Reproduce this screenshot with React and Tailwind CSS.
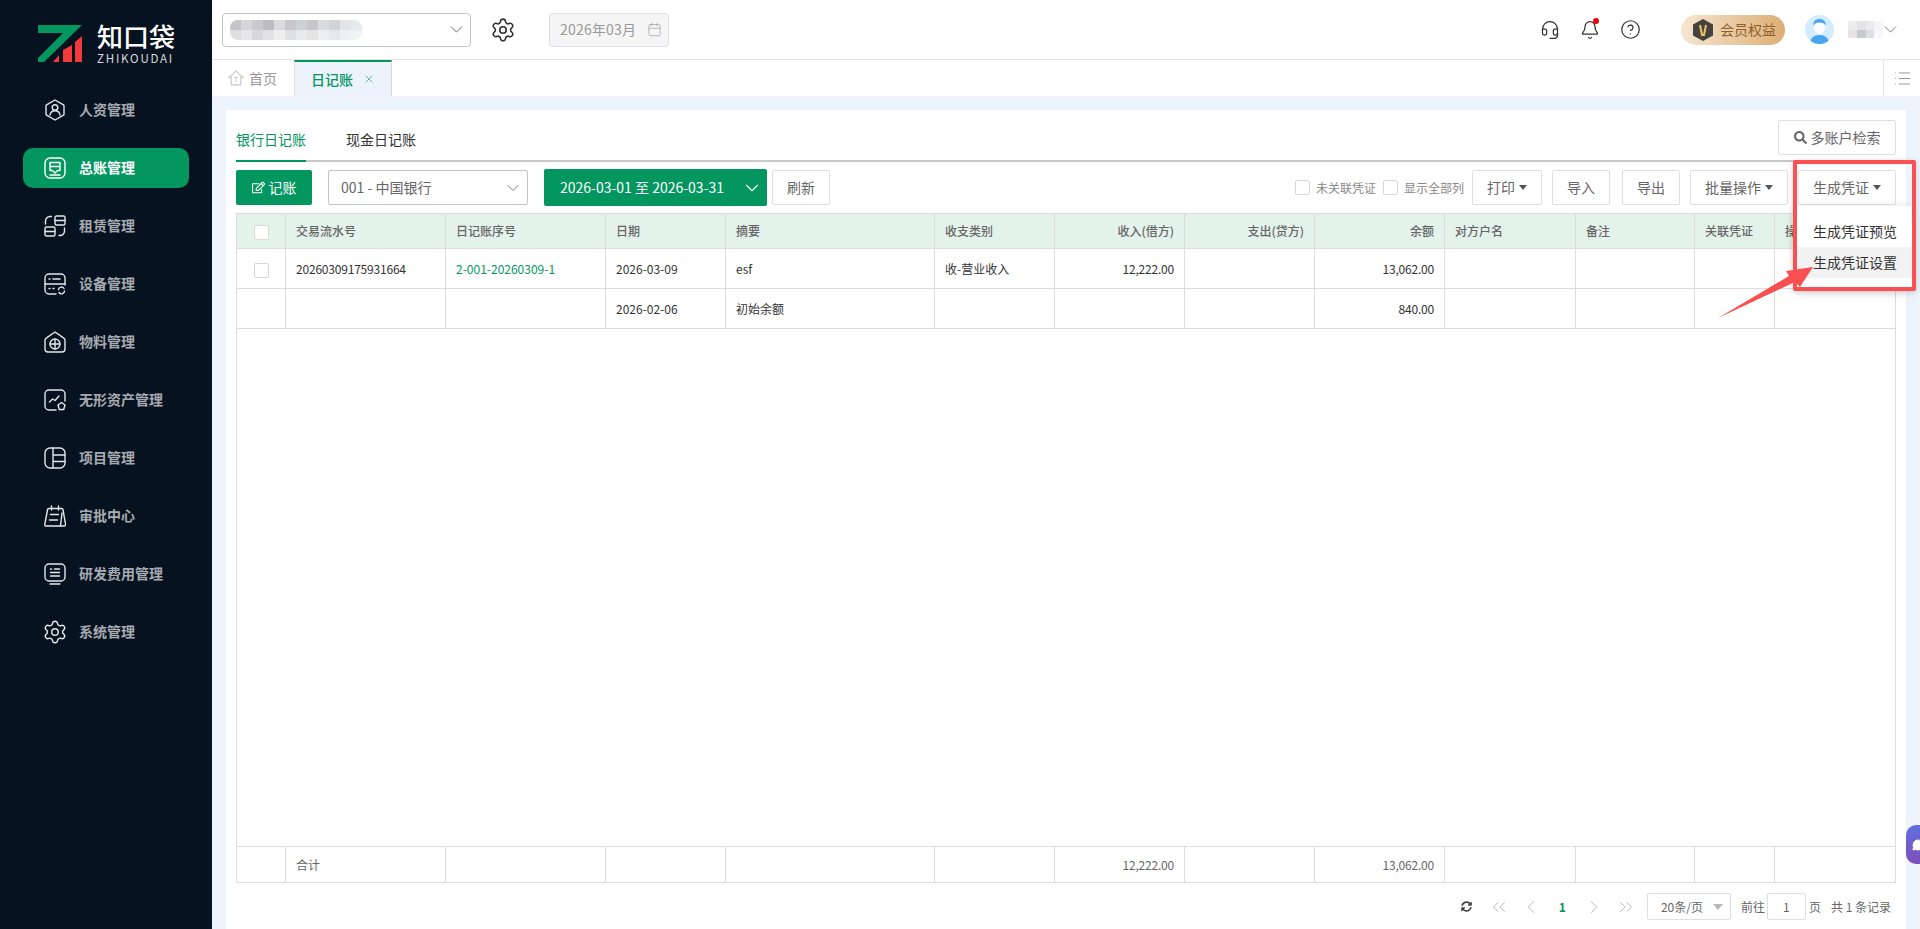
import {
  Bell,
  Calendar,
  ChevronDown,
  ChevronLeft,
  ChevronRight,
  ChevronsLeft,
  ChevronsRight,
  CircleHelp,
  Headset,
  List,
  MessageCircle,
  Settings,
  X,
} from "lucide-react";
import { FaRegEdit, FaSearch, FaSyncAlt } from "react-icons/fa";

const GRID =
  "grid grid-cols-[49px_160px_160px_120px_209px_120px_130px_130px_130px_131px_119px_80px_120px]";

const iconProps = {
  width: 22,
  height: 22,
  viewBox: "0 0 22 22",
  fill: "none",
  stroke: "currentColor",
  strokeWidth: 1.4,
  strokeLinecap: "round",
  strokeLinejoin: "round",
};

const navItems = [
  {
    label: "人资管理",
    icon: (
      <svg {...iconProps}>
        <path d="M11 1l8.500 4.800a1 1 0 0 1 .5.9v8.600a1 1 0 0 1-.5.9L11 21l-8.500-4.800a1 1 0 0 1-.5-.9V6.700a1 1 0 0 1 .5-.9z" />
        <circle cx="11" cy="8.500" r="2.800" />
        <path d="M6 16c.5-3 2.500-4.200 5-4.200s4.500 1.200 5 4.200" />
      </svg>
    ),
  },
  {
    label: "总账管理",
    active: true,
    icon: (
      <svg {...iconProps}>
        <rect x="1" y="1" width="20" height="20" rx="5" />
        <path d="M6 5.500h10v8h-2.500L11 16l-2.500-2.500H6zM6 9.500h10" />
        <path d="M6 18h10" />
      </svg>
    ),
  },
  {
    label: "租赁管理",
    icon: (
      <svg {...iconProps}>
        <path d="M1.500 9V6a4.500 4.500 0 0 1 4.500-4.500h1.500" />
        <rect x="11" y="1" width="10" height="9" rx="1.500" />
        <path d="M11 5.500h10" />
        <rect x="1" y="12" width="10" height="9" rx="1.500" />
        <path d="M1 16.500h10M20.500 13v3a4.500 4.500 0 0 1-4.500 4.500h-1" />
      </svg>
    ),
  },
  {
    label: "设备管理",
    icon: (
      <svg {...iconProps}>
        <path d="M12 21H5a4 4 0 0 1-4-4V5a4 4 0 0 1 4-4h12a4 4 0 0 1 4 4v7" />
        <path d="M1 11h20M5 6h1M9 6h7M5 15.500h1M9 15.500h1" />
        <path d="M14.500 16.500a3 3 0 0 1 5.500-1M20.500 18a3 3 0 0 1-5.500 1.500" />
      </svg>
    ),
  },
  {
    label: "物料管理",
    icon: (
      <svg {...iconProps}>
        <path d="M11 1l8.500 5.800a3 3 0 0 1 1.500 2.500V18a3 3 0 0 1-3 3H4a3 3 0 0 1-3-3V9.300a3 3 0 0 1 1.500-2.500z" />
        <circle cx="11" cy="13" r="5" />
        <path d="M6 13h10M11 8v10" />
      </svg>
    ),
  },
  {
    label: "无形资产管理",
    icon: (
      <svg {...iconProps}>
        <path d="M12 21H5a4 4 0 0 1-4-4V5a4 4 0 0 1 4-4h12a4 4 0 0 1 4 4v7" />
        <path d="M5.500 13l3-3 2.500 1.500L15 7" />
        <path d="M17.500 13.500l3.500 2.500-1.300 4.500h-4.400L14 16z" />
      </svg>
    ),
  },
  {
    label: "项目管理",
    icon: (
      <svg {...iconProps}>
        <rect x="1" y="1" width="20" height="20" rx="5" />
        <path d="M9 1v20M9 8h12M9 14.500h12" />
      </svg>
    ),
  },
  {
    label: "审批中心",
    icon: (
      <svg {...iconProps}>
        <path d="M5 3.500h12.500a1.500 1.500 0 0 1 1.500 1.300L21.500 19a1.500 1.500 0 0 1-1.500 2H2a1.300 1.300 0 0 1-1.200-1.800L3.500 5A1.500 1.500 0 0 1 5 3.500z" />
        <path d="M7.500 1v4M14.500 1v4M6.500 9.500h8M5.500 15h8M16.500 21l1.500-13" />
      </svg>
    ),
  },
  {
    label: "研发费用管理",
    icon: (
      <svg {...iconProps}>
        <rect x="1" y="1" width="20" height="17" rx="4" />
        <path d="M6.500 6h1M10.500 6h5M6.500 9.500h9M6.500 13h9M6 21h10" />
      </svg>
    ),
  },
  {
    label: "系统管理",
    icon: <Settings size={26} strokeWidth={1.3} className="shrink-0" />,
  },
];

const columns = [
  { label: "" },
  { label: "交易流水号" },
  { label: "日记账序号" },
  { label: "日期" },
  { label: "摘要" },
  { label: "收支类别" },
  { label: "收入(借方)", right: true },
  { label: "支出(贷方)", right: true },
  { label: "余额", right: true },
  { label: "对方户名" },
  { label: "备注" },
  { label: "关联凭证" },
  { label: "操作" },
];

const rows = [
  ["check", "20260309175931664", "2-001-20260309-1", "2026-03-09", "esf", "收-营业收入", "12,222.00", "", "13,062.00", "", "", "", ""],
  ["", "", "", "2026-02-06", "初始余额", "", "", "", "840.00", "", "", "", ""],
];

const totals = ["", "合计", "", "", "", "", "12,222.00", "", "13,062.00", "", "", "", ""];

const companyMosaic = [
  "bg-[#c4c4c9]", "bg-[#d6d6da]", "bg-[#c9c9ce]", "bg-[#bcbcc2]", "bg-[#dcdce0]", "bg-[#c6c6cc]", "bg-[#ced0d4]", "bg-[#c8c6ca]", "bg-[#dadcdf]", "bg-[#d2d4d9]", "bg-[#e2e4e7]", "bg-[#e8e9ec]",
  "bg-[#dededf]", "bg-[#e6e6e8]", "bg-[#d8d8da]", "bg-[#e2e2e4]", "bg-[#eeeeef]", "bg-[#e0e0e2]", "bg-[#e8e9ea]", "bg-[#e4e4e4]", "bg-[#eeeeee]", "bg-[#e6e8ea]", "bg-[#eff0f1]", "bg-[#f1f2f3]",
];

const nameMosaic = [
  "bg-[#ececec]", "bg-[#e4e4e6]", "bg-[#eaeaea]", "bg-[#f6f6f8]",
  "bg-[#e8e4e4]", "bg-[#c8cad2]", "bg-[#dedfe2]", "bg-[#f8f8fa]",
];

function Caret() {
  return (
    <span className="ml-1 inline-block border-x-[4px] border-t-[5px] border-x-transparent border-t-[#555]" />
  );
}

function Button({ children, className = "" }) {
  return (
    <button
      className={`flex h-[35px] items-center justify-center rounded-[2px] border border-[#dcdfe6] bg-white text-[14px] text-[#666] ${className}`}
    >
      {children}
    </button>
  );
}

function Checkbox({ className = "" }) {
  return (
    <span
      className={`block size-[15px] rounded-[2px] border border-[#d4d6d9] bg-white ${className}`}
    />
  );
}

function LogoMark() {
  return (
    <svg width="44" height="37" viewBox="0 0 44 37" className="mt-[2px]">
      <polygon points="0,0 44,0 6,37 0,37 0,33 25,8 0,8" fill="#03965e" />
      <polygon points="15,37 21,30 21,37" fill="#f33a3a" />
      <polygon points="25,37 25,25 34,20 34,37" fill="#f33a3a" />
      <polygon points="37,37 37,17 44,11 44,37" fill="#f33a3a" />
    </svg>
  );
}

function Sidebar() {
  return (
    <aside className="flex w-[212px] shrink-0 flex-col bg-[#06121f]">
      <div className="flex h-[90px] items-start pt-[23px] pl-[38px]">
        <LogoMark />
        <div className="ml-[15px] flex flex-col text-white">
          <span className="h-[26px] text-[26px] leading-[26px] font-medium">知口袋</span>
          <span className="mt-[4px] text-[11.500px] leading-[10px] tracking-[1.8px] text-[#d8dadd]">ZHIKOUDAI</span>
        </div>
      </div>
      <nav className="flex flex-col gap-[18px] px-[23px]">
        {navItems.map((item) => (
          <a
            key={item.label}
            className={`flex h-[40px] items-center gap-[13px] rounded-[10px] pl-[21px] text-[14px] font-bold ${
              item.active ? "bg-[#03965e] text-white" : "text-[#a6abb1]"
            }`}
          >
            <span className={`flex w-[22px] justify-center ${item.active ? "text-white" : "text-[#e4e6e8]"}`}>
              {item.icon}
            </span>
            <span className="pb-[2px]">{item.label}</span>
          </a>
        ))}
      </nav>
    </aside>
  );
}

function Header() {
  return (
    <header className="flex h-[60px] shrink-0 items-center border-b border-[#e6e6e6] bg-white pl-[10px]">
      <div className="flex h-[34px] w-[249px] items-center justify-between rounded-[4px] border border-[#c0c4cc] pr-[3px] pl-[7px]">
        <div className="grid w-[132px] grid-cols-12 overflow-hidden rounded-[8px]">
          {companyMosaic.map((c, i) => (
            <span key={i} className={`h-[10px] ${c}`} />
          ))}
        </div>
        <ChevronDown size={21} strokeWidth={1} className="text-[#555]" />
      </div>
      <Settings size={26} strokeWidth={1.5} className="ml-[19px] text-[#333]" />
      <div className="ml-[33px] flex h-[34px] w-[120px] items-center gap-[11px] rounded-[4px] border border-[#dcdfe6] bg-[#f5f5f5] pl-[10px] text-[14px] tracking-[0.2px] text-[#999]">
        2026年03月
        <Calendar size={15} strokeWidth={1.3} className="text-[#aaa]" />
      </div>
      <div className="ml-auto flex items-center">
        <Headset size={20} strokeWidth={1.5} className="text-[#333]" />
        <span className="relative ml-[20px]">
          <Bell size={20} strokeWidth={1.5} className="text-[#333]" />
          <span className="absolute -top-[2px] right-[1px] size-[6px] rounded-full bg-red-600" />
        </span>
        <CircleHelp size={21} strokeWidth={1.4} className="ml-[20px] text-[#333]" />
        <div className="ml-[40px] flex h-[30px] w-[104px] items-center rounded-full bg-linear-to-r from-[#f6e6d0] to-[#dcae74] pl-[12px]">
          <svg width="20" height="22" viewBox="0 0 20 22">
            <polygon points="10,0 20,5.500 20,16.500 10,22 0,16.500 0,5.500" fill="#45433f" />
            <path d="M7 6l2 10h2l2-10" fill="none" stroke="#eec15f" strokeWidth="2" />
          </svg>
          <span className="ml-[7px] text-[14px] text-[#8f5f30]">会员权益</span>
        </div>
        <div className="ml-[20px] size-[29px] overflow-hidden rounded-full bg-[#d3ecff]">
          <svg width="29" height="29" viewBox="0 0 29 29">
            <ellipse cx="14.500" cy="12" rx="6" ry="7" fill="#fbfdff" />
            <path d="M8.500 11c-.5-5 2-7 6-7s6.500 2 6 7c-1-3-3-3.500-6-3.500s-5 .5-6 3.500z" fill="#4ba4ee" />
            <path d="M5 29c0-6 4-9 9.500-9s9.500 3 9.500 9z" fill="#4ba4ee" />
          </svg>
        </div>
        <div className="ml-[14px] grid w-[35px] grid-cols-4">
          {nameMosaic.map((c, i) => (
            <span key={i} className={`h-[8.500px] ${c}`} />
          ))}
        </div>
        <ChevronDown size={21} strokeWidth={1} className="mr-[19px] -ml-[3px] text-[#667]" />
      </div>
    </header>
  );
}

function TabsBar() {
  return (
    <div className="flex h-[36px] shrink-0 items-stretch bg-white">
      <div className="flex w-[82px] items-center gap-[5px] pl-[16px] text-[14px] text-[#999]">
        <svg width="16" height="16" viewBox="0 0 15 15" fill="none" stroke="#c8c8c8" strokeWidth="1.100">
          <path d="M7.500 1L14 7h-2v7H3V7H1z" />
          <path d="M6 7h3M7.500 7v4" />
        </svg>
        首页
      </div>
      <div className="flex w-[98px] items-center gap-[10px] border-x border-t-2 border-x-[#d8dbe0] border-t-[#03965e] bg-[#edf3fd] pl-[16px] text-[14px] font-medium text-[#03965e]">
        日记账
        <X size={12} strokeWidth={1.2} />
      </div>
      <div className="ml-auto flex w-[37px] items-center justify-center border-l border-[#e6e6e6]">
        <List size={19} strokeWidth={1.1} className="text-[#888]" />
      </div>
    </div>
  );
}

function Toolbar() {
  return (
    <div className="mt-[8px] flex h-[35px] items-center">
      <button className="flex h-[35px] w-[76px] items-center justify-center gap-[4px] rounded-[2px] bg-[#03965e] text-[14px] text-white">
        <FaRegEdit size={13} />
        记账
      </button>
      <div className="ml-[16px] flex h-[35px] w-[200px] items-center justify-between rounded-[2px] border border-[#c0c4cc] pr-[4px] pl-[12px] text-[14px] text-[#666]">
        001 - 中国银行
        <ChevronDown size={20} strokeWidth={1} />
      </div>
      <button className="ml-[16px] flex h-[37px] w-[223px] items-center justify-between rounded-[2px] bg-[#03965e] pr-[4px] pl-[16px] text-[14px] text-white">
        2026-03-01 至 2026-03-31
        <ChevronDown size={22} strokeWidth={1.2} />
      </button>
      <Button className="ml-[5px] w-[58px]">刷新</Button>
      <div className="ml-auto flex items-center gap-[6px] text-[12px] text-[#888]">
        <Checkbox />
        未关联凭证
        <Checkbox className="ml-[1px]" />
        显示全部列
      </div>
      <Button className="ml-[8px] w-[70px]">
        打印
        <Caret />
      </Button>
      <Button className="ml-[10px] w-[58px]">导入</Button>
      <Button className="ml-[12px] w-[58px]">导出</Button>
      <Button className="ml-[10px] w-[98px]">
        批量操作
        <Caret />
      </Button>
      <Button className="ml-[10px] w-[98px]">
        生成凭证
        <Caret />
      </Button>
    </div>
  );
}

function Cell({ children, right, className = "" }) {
  const numeric = typeof children === "string" && /^[\d,.]+$/.test(children);
  return (
    <div
      className={`flex items-center border-r border-[#dcdcdc] px-[10px] last:border-r-0 ${
        right ? "justify-end" : ""
      } ${numeric ? "tracking-[-0.2px]" : ""} ${className}`}
    >
      {children}
    </div>
  );
}

function Table() {
  return (
    <div className="mt-[8px] flex h-[670px] w-[1660px] flex-col border border-[#dcdcdc] text-[12px]">
      <div className={`${GRID} h-[35px] border-b border-[#dcdcdc] bg-[#e4f2ec] font-medium text-[#666]`}>
        {columns.map((col, i) => (
          <Cell key={i} right={col.right} className={i === 0 ? "justify-center" : ""}>
            {i === 0 ? <Checkbox className="mt-[2px] border-[#d5dcd9] bg-[#e6f0ec]" /> : col.label}
          </Cell>
        ))}
      </div>
      {rows.map((row, r) => (
        <div key={r} className={`${GRID} h-[40px] border-b border-[#dcdcdc] text-[#333]`}>
          {row.map((val, i) => (
            <Cell
              key={i}
              right={columns[i].right}
              className={`${i === 0 ? "justify-center" : ""} ${i === 2 ? "text-[#03965e]" : ""}`}
            >
              {val === "check" ? <Checkbox className="mt-[3px]" /> : val}
            </Cell>
          ))}
        </div>
      ))}
      <div className="flex-1" />
      <div className={`${GRID} h-[36px] border-t border-[#dcdcdc] text-[#666]`}>
        {totals.map((val, i) => (
          <Cell key={i} right={columns[i].right}>
            {val}
          </Cell>
        ))}
      </div>
    </div>
  );
}

function Pagination() {
  return (
    <div className="flex h-[47px] items-center justify-end pr-[5px] text-[12px] text-[#666]">
      <FaSyncAlt size={11} className="text-[#444]" />
      <ChevronsLeft size={22} strokeWidth={0.9} className="ml-[16px] text-[#aaa]" />
      <ChevronLeft size={22} strokeWidth={0.9} className="ml-[10px] text-[#aaa]" />
      <span className="ml-[17px] font-bold text-[#03965e]">1</span>
      <ChevronRight size={22} strokeWidth={0.9} className="ml-[17px] text-[#aaa]" />
      <ChevronsRight size={22} strokeWidth={0.9} className="ml-[10px] text-[#aaa]" />
      <div className="ml-[10px] flex h-[27px] w-[84px] items-center justify-between rounded-[2px] border border-[#dcdfe6] pr-[7px] pl-[13px]">
        20条/页
        <span className="border-x-[5px] border-t-[6px] border-x-transparent border-t-[#bbb]" />
      </div>
      <span className="ml-[10px]">前往</span>
      <div className="ml-[2px] flex h-[27px] w-[39px] items-center justify-center rounded-[2px] border border-[#dcdfe6]">1</div>
      <span className="ml-[3px]">页</span>
      <span className="ml-[10px]">共 1 条记录</span>
    </div>
  );
}

function Annotation() {
  return (
    <>
      <div className="absolute top-[206px] left-[1797px] flex h-[84px] w-[115px] flex-col bg-white pt-[10px] text-[14px] text-[#333] shadow-[0_2px_12px_rgba(0,0,0,0.12)]">
        <div className="flex h-[31px] items-center pl-[16px]">生成凭证预览</div>
        <div className="flex h-[31px] items-center bg-[#f2f2f2] pl-[16px]">生成凭证设置</div>
      </div>
      <div className="absolute top-[160px] left-[1793px] h-[131px] w-[123px] rounded-[2px] border-4 border-[#fb5052] shadow-[0_1px_6px_rgba(0,0,0,0.15)]" />
      <svg className="absolute top-[260px] left-[1710px]" width="110" height="65" viewBox="0 0 110 65">
        <polygon points="8,58 79,16 76,11 103,7 90,27 85,22" fill="#fb5052" />
      </svg>
      <div className="absolute top-[825px] left-[1906px] flex h-[39px] w-[14px] items-center overflow-hidden rounded-l-[10px] bg-linear-to-b from-[#5f6fe0] to-[#7a4fb8] pl-[6px]">
        <MessageCircle size={12} className="shrink-0 fill-white text-white" />
      </div>
    </>
  );
}

export default function App() {
  return (
    <div className="relative flex h-[929px] overflow-hidden bg-white font-['Noto_Sans_CJK_SC','Noto_Sans',sans-serif]">
      <Sidebar />
      <main className="flex min-w-0 flex-1 flex-col">
        <Header />
        <TabsBar />
        <div className="flex-1 bg-[#eef4fe] px-[14px] pt-[14px]">
          <div className="h-full bg-white px-[10px]">
            <div className="flex h-[52px] items-stretch justify-between border-b-2 border-[#c8c8c8]">
              <div className="flex gap-[40px] text-[14px]">
                <div className="-mb-[2px] flex w-[70px] items-center border-b-2 border-[#03965e] pt-[8px] text-[#03965e]">
                  银行日记账
                </div>
                <div className="flex items-center pt-[8px] text-[#333]">现金日记账</div>
              </div>
              <Button className="mt-[10px] h-[34px] w-[118px] gap-[4px]">
                <FaSearch size={13} />
                多账户检索
              </Button>
            </div>
            <Toolbar />
            <Table />
            <Pagination />
          </div>
        </div>
      </main>
      <Annotation />
    </div>
  );
}
